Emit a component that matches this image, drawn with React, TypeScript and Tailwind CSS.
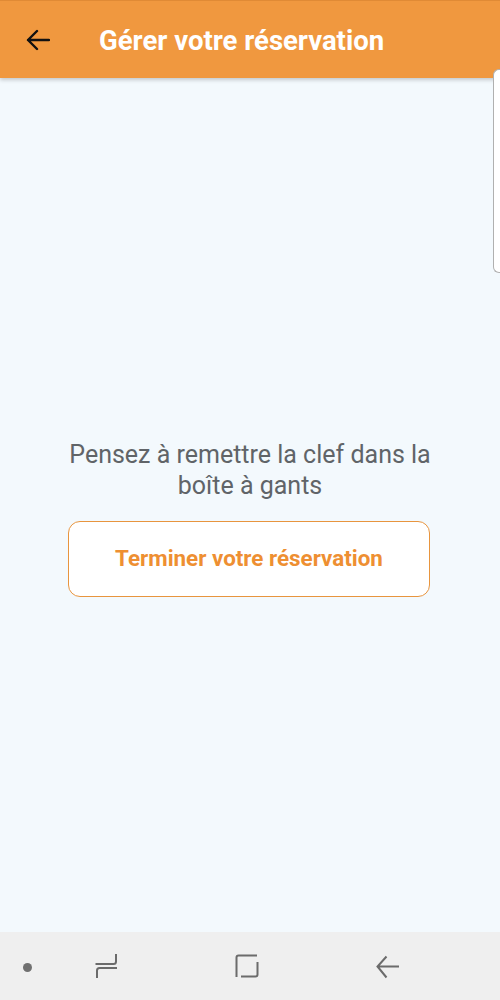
import React from "react";

export default function App() {
  return (
    <div
      className="w-[500px] h-[1000px] flex flex-col bg-[#f3f9fd] relative overflow-hidden"
      style={{ fontFamily: "Roboto, 'Liberation Sans', sans-serif" }}
    >
      <header className="h-[78px] shrink-0 bg-[#f0983f] flex items-center shadow-[0_2px_4px_rgba(0,0,0,0.2)] z-10 border-t border-[#e08a35]">
        <div className="w-[99px] flex items-center pl-[25px]">
          <svg width="25" height="22" viewBox="0 0 25 22" className="mt-[1px]">
            <path d="M24 11H3M12 2L3 11L12 20" stroke="#111" strokeWidth="2.4" fill="none" strokeLinecap="round" strokeLinejoin="round" />
          </svg>
        </div>
        <h1 className="text-white font-bold text-[27.5px] mt-[2px] leading-none">Gérer votre réservation</h1>
      </header>

      <main className="flex-1 flex flex-col items-center pt-[361px]">
        <p className="text-[#606468] text-[25px] leading-[31px] text-center w-[380px]">
          Pensez à remettre la clef dans la boîte à gants
        </p>
        <button className="mt-[20px] w-[362px] h-[76px] ml-[-2px] rounded-[12px] border border-[#e8953e] bg-white text-[#ee8f32] font-bold text-[22.4px]">
          Terminer votre réservation
        </button>
      </main>

      <nav className="h-[68px] shrink-0 bg-[#efefef] relative">
        <div className="absolute left-[23px] top-[31px] w-[9px] h-[9px] rounded-full bg-[#707070]" />
        <svg className="absolute left-[90px] top-[18px]" width="32" height="32" viewBox="90 950 32 32">
          <path d="M116 954V961.5Q116 964 113.5 964H95.5" stroke="#6b6b6b" strokeWidth="2" fill="none" />
          <path d="M117 968H99.5Q97 968 97 970.5V978" stroke="#6b6b6b" strokeWidth="2" fill="none" />
        </svg>
        <svg className="absolute left-[230px] top-[18px]" width="34" height="34" viewBox="230 950 34 34">
          <path d="M236.5 977V957.5Q236.5 955.5 238.5 955.5H257" stroke="#6b6b6b" strokeWidth="2" fill="none" />
          <path d="M257.5 962V974.5Q257.5 976.5 255.5 976.5H241" stroke="#6b6b6b" strokeWidth="2" fill="none" />
        </svg>
        <svg className="absolute left-[372px] top-[18px]" width="34" height="34" viewBox="372 950 34 34">
          <path d="M399 966.5H378M386.5 956.5L377.5 966.5L386.5 977.5" stroke="#6b6b6b" strokeWidth="2" fill="none" />
        </svg>
      </nav>

      <div className="absolute right-0 top-[69px] w-[7px] h-[204px] bg-white border border-r-0 border-[#b0b0b0] rounded-l-[6px] z-20" />
    </div>
  );
}
